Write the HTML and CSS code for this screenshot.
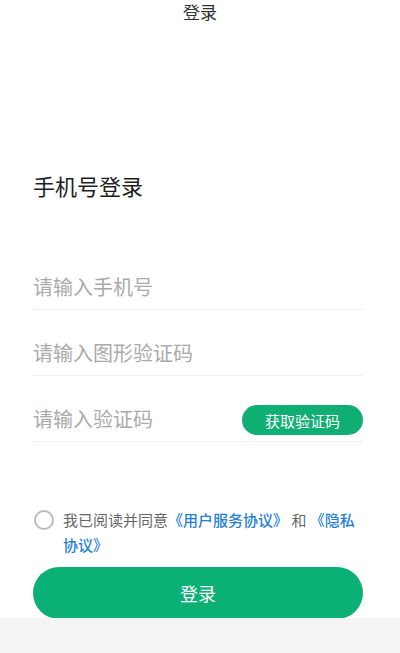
FILE: index.html
```html
<!DOCTYPE html>
<html lang="zh-CN">
<head>
    <meta charset="UTF-8">
    <meta name="viewport" content="width=device-width, initial-scale=1.0">
    <title>登录</title>
    <link rel="stylesheet" href="styles.css">
</head>
<body>
    <div class="page">
        <div class="topbar">登录</div>
        <div class="container">
            <h1 class="title">手机号登录</h1>
            <div class="field first">
                <input type="tel" placeholder="请输入手机号">
            </div>
            <div class="field">
                <input type="text" placeholder="请输入图形验证码">
            </div>
            <div class="field">
                <input type="text" placeholder="请输入验证码">
                <button type="button" class="code-btn">获取验证码</button>
            </div>
            <div class="agree">
                <span class="radio"></span>
                <p class="agree-text">我已阅读并同意<a href="#">《用户服务协议》</a> 和 <a href="#">《隐私协议》</a></p>
            </div>
            <button type="button" class="btn">登录</button>
        </div>
    </div>
    <div class="footer"></div>
</body>
</html>
```

FILE: styles.css
```css
body {
    margin: 0;
    font-family: "Noto Sans CJK SC", "Noto Sans", sans-serif;
    background: #fff;
    color: #222;
}
.page {
    height: 618px;
}
.topbar {
    height: 26px;
    line-height: 24px;
    text-align: center;
    font-size: 17px;
    color: #333;
}
.container {
    padding: 0 37px 0 33px;
}
.title {
    margin: 144px 0 0 0;
    font-size: 22px;
    line-height: 30px;
    font-weight: 400;
    color: #1e1e1e;
}
.field {
    height: 42px;
    display: flex;
    align-items: center;
    margin-top: 23px;
    border-bottom: 1px solid #f0f0f0;
}
.field.first {
    margin-top: 67px;
}
.field input {
    flex: 1;
    min-width: 0;
    border: none;
    outline: none;
    padding: 0 0 3px 0;
    font-family: inherit;
    font-size: 20px;
    color: #333;
    background: transparent;
}
.field input::placeholder {
    color: #aaa;
}
.code-btn {
    width: 121px;
    height: 30px;
    border: none;
    border-radius: 15px;
    background: #0fae72; /* green accent */
    color: #fff;
    font-family: inherit;
    font-size: 15px;
    padding: 0;
}
.agree {
    display: flex;
    align-items: flex-start;
    margin-top: 65px;
}
.radio {
    flex: none;
    width: 16px;
    height: 16px;
    border: 2px solid #bbb;
    border-radius: 50%;
    margin: 3px 9px 0 1px;
}
.agree-text {
    margin: 0;
    font-size: 15px;
    line-height: 25px;
    color: #666;
}
.agree-text a {
    color: #1f7fd6;
    font-weight: 500;
    text-decoration: none;
}
.btn {
    display: block;
    width: 100%;
    height: 52px;
    margin-top: 10px;
    border: none;
    border-radius: 26px;
    background: #0bb074; /* green accent */
    color: #fff;
    font-family: inherit;
    font-size: 18px;
}
.footer {
    height: 35px;
    background: #f4f4f4;
}
```
